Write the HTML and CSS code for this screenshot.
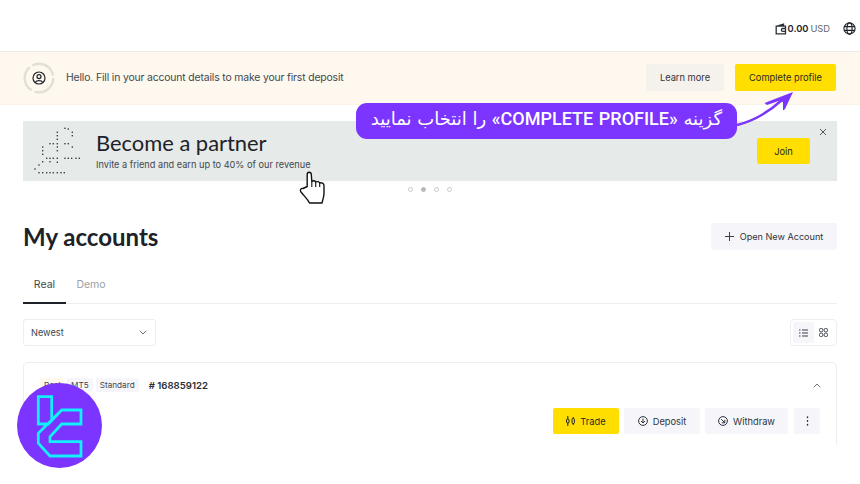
FILE: index.html
```html
<!DOCTYPE html>
<html lang="en">
<head>
    <meta charset="utf-8">
    <title>My accounts</title>
    <link rel="stylesheet" href="styles.css">
</head>
<body>

<header class="topbar">
    <svg class="wallet" width="12" height="12" viewBox="0 0 12 12"><path d="M2 3.2 8.5 1.2V3M1.2 3.2h9.3v7.6H1.2zM10.500 5.500H7.800a1.300 1.300 0 0 0 0 2.800h2.700" fill="none" stroke="#2b2f36" stroke-width="1.300"/></svg>
    <b class="balance">0.00</b>
    <span class="currency">USD</span>
    <svg class="globe" width="13" height="13" viewBox="0 0 13 13"><g fill="none" stroke="#1d2229" stroke-width="1.100"><circle cx="6.500" cy="6.500" r="5.600"/><ellipse cx="6.500" cy="6.500" rx="2.600" ry="5.600"/><path d="M1.200 4.600h10.600M1.200 8.400h10.600"/></g></svg>
</header>

<section class="notice">
    <svg class="ring" width="32" height="32" viewBox="0 0 32 32">
        <g fill="none">
            <circle cx="16" cy="16" r="14.300" stroke="#e2dfd9" stroke-width="2.400" stroke-dasharray="27 3"/>
            <g stroke="#20252b" stroke-width="1.200">
                <circle cx="16" cy="16" r="6"/>
                <circle cx="16" cy="14.600" r="2"/>
                <path d="M12.300 20.500c1-2.400 6.400-2.400 7.400 0"/>
            </g>
        </g>
    </svg>
    <p class="notice-text">Hello. Fill in your account details to make your first deposit</p>
    <a class="btn btn-soft notice-learn">Learn more</a>
    <a class="btn btn-yellow notice-complete">Complete profile</a>
</section>

<main class="content">
    <section class="partner">
        <svg class="partner-art" width="50" height="50" viewBox="0 0 50 50">
            <path fill="none" stroke="#23282e" stroke-width="1.600" stroke-linecap="round" d="M32 2.300h0M35.300 3h0M39.300 6.300h0M39.300 9.700h0M24.300 6.300h0M24.300 9.700h0M24.300 13.300h0M17 17.700h0M20.300 17.700h0M24.300 17.700h0M32 17.700h0M35.300 17.700h0M39.300 21h0M9.700 21h0M9.700 24.700h0M9.700 28.300h0M24.300 21h0M24.300 24.700h0M13.700 32.300h0M17 32.300h0M20.300 32.300h0M24.300 32.300h0M32 32.300h0M35.300 32.300h0M38.700 32.300h0M43 32.300h0M46.300 32.300h0M9.700 35.700h0M17 35.700h0M24.300 36.300h0M6 39h0M2 43h0M6 46.700h0M9.700 46.700h0M13.700 46.700h0M17 46.700h0M20.300 46.700h0M24.300 46.700h0M28 46.700h0M31.300 46.700h0"/>
        </svg>
        <div class="partner-copy">
            <h2 class="partner-title">Become a partner</h2>
            <p class="partner-sub">Invite a friend and earn up to 40% of our revenue</p>
        </div>
        <a class="btn btn-yellow partner-join">Join</a>
        <svg class="partner-close" width="8" height="8" viewBox="0 0 8 8"><path d="M1 1l6 6M7 1 1 7" stroke="#555b62" stroke-width="1"/></svg>
    </section>

    <div class="dots">
        <i class="dot"></i><i class="dot dot-on"></i><i class="dot"></i><i class="dot"></i>
    </div>

    <div class="title-row">
        <h1>My accounts</h1>
        <a class="btn btn-soft btn-open">
            <svg width="9" height="9" viewBox="0 0 9 9"><path d="M4.500 0v9M0 4.500h9" stroke="#3a3f46" stroke-width="1"/></svg>
            Open New Account
        </a>
    </div>

    <nav class="tabs">
        <a class="tab tab-on">Real</a>
        <a class="tab">Demo</a>
    </nav>

    <div class="toolbar">
        <div class="select">
            Newest
            <svg width="8" height="5" viewBox="0 0 8 5"><path d="M.7.7 4 4 7.300.7" fill="none" stroke="#777" stroke-width="1"/></svg>
        </div>
        <div class="view-toggle">
            <span class="view view-on">
                <svg width="9" height="8" viewBox="0 0 9 8"><path d="M0 1h1.500M0 4h1.500M0 7h1.500M3 1h6M3 4h6M3 7h6" stroke="#3a3f46" stroke-width="1"/></svg>
            </span>
            <span class="view">
                <svg width="9" height="9" viewBox="0 0 9 9"><g fill="none" stroke="#3a3f46" stroke-width="1"><rect x=".5" y=".5" width="3.300" height="3.300" rx="1.200"/><rect x="5.200" y=".5" width="3.300" height="3.300" rx="1.200"/><rect x=".5" y="5.200" width="3.300" height="3.300" rx="1.200"/><rect x="5.200" y="5.200" width="3.300" height="3.300" rx="1.200"/></g></svg>
            </span>
        </div>
    </div>

    <section class="card">
        <div class="card-head">
            <span class="tag tag-real">Real</span>
            <span class="tag">MT5</span>
            <span class="tag">Standard</span>
            <b class="acc-number"># 168859122</b>
            <svg class="card-chevron" width="8" height="5" viewBox="0 0 8 5"><path d="M.7 4.300 4 1 7.300 4.300" fill="none" stroke="#777" stroke-width="1"/></svg>
        </div>
        <div class="card-actions">
            <a class="btn btn-yellow btn-action">
                <svg width="9" height="10" viewBox="0 0 9 10"><g fill="none" stroke="#1d2229" stroke-width="1"><rect x=".6" y="3" width="2.400" height="4" rx="1"/><rect x="6" y="2.500" width="2.400" height="5" rx="1"/><path d="M1.800 0v3M1.800 7v3M7.200 1v1.500M7.200 7.500V9"/></g></svg>
                Trade
            </a>
            <a class="btn btn-soft btn-action btn-deposit">
                <svg width="10" height="10" viewBox="0 0 10 10"><g fill="none" stroke="#30353c" stroke-width="1"><circle cx="5" cy="5" r="4.400"/><path d="M5 2.500v4.500M3 5l2 2 2-2"/></g></svg>
                Deposit
            </a>
            <a class="btn btn-soft btn-action btn-withdraw">
                <svg width="10" height="10" viewBox="0 0 10 10"><g fill="none" stroke="#30353c" stroke-width="1"><circle cx="5" cy="5" r="4.400"/><path d="M3.200 3.200 6.800 6.800M6.800 3.800v3H3.800"/></g></svg>
                Withdraw
            </a>
            <a class="btn btn-soft btn-more">
                <svg width="3" height="10" viewBox="0 0 3 10"><path d="M1.500 1v.5M1.500 4.800v.5M1.500 8.500v.5" stroke="#2b2f36" stroke-width="1.500" stroke-linecap="round"/></svg>
            </a>
        </div>
    </section>
</main>

<!-- tutorial marks laid over the screenshot -->
<div class="hint" dir="rtl">گزینه «COMPLETE PROFILE» را انتخاب نمایید</div>

<svg class="hint-arrow" width="60" height="40" viewBox="0 0 60 40">
    <path d="M0 33Q24 27 45 8" fill="none" stroke="#7b35ff" stroke-width="2.400"/>
    <path d="M56 0 27.500 11 30 13 43 8.500 46 10 46 18.500 48 17Z" fill="#7b35ff"/>
</svg>

<svg class="hand" width="28" height="36" viewBox="0 0 28 36">
    <path d="M8.200 16.500 V4.500C8.200 1.500 12 1.500 12.300 4.500L12.800 11.500C14 10.300 16.300 10.500 16.700 12C18 11.300 20.300 11.500 20.700 13C22.500 12.300 25 13.500 25 15.500V23C25 27 24 29 23 33H10.500C9 29.500 6.500 27.500 2 22C.5 20 2 18 4 18.500Z" fill="#fff" stroke="#111" stroke-width="1.400" stroke-linejoin="round"/>
    <path d="M12.800 11.500V17M16.700 12V17M20.700 13V17" fill="none" stroke="#111" stroke-width="1.100"/>
</svg>

<svg class="brand" width="85" height="85" viewBox="0 0 85 85">
    <circle cx="42.500" cy="42.500" r="42.500" fill="#7b35ff"/>
    <path d="M34.700 37V13.700H21.300V41H31.300L44.700 27H64V41H44.700L33 53.700V58.700H64V73H33L21.300 60.300V50.300L44.700 27" fill="none" stroke="#12f0fb" stroke-width="2.800"/>
</svg>

</body>
</html>
```

FILE: styles.css
```css
* {
    box-sizing: border-box;
}

body {
    margin: 0;
    height: 484px;
    overflow: hidden;
    position: relative;
    background: #fff;
    font-family: Inter, "Liberation Sans", sans-serif;
    color: #30353c;
}

h1, h2, p {
    margin: 0;
}

/* top bar */
.topbar {
    height: 52px;
    padding: 6px 4px 0 0;
    display: flex;
    align-items: center;
    justify-content: flex-end;
    border-bottom: 1px solid #eceae6;
    font-size: 9.300px;
}

.wallet {
    margin-right: 1px;
}

.balance {
    font-weight: 600;
    color: #1d2229;
}

.currency {
    margin-left: 2px;
    color: #60656c;
}

.globe {
    margin-left: 13px;
}

/* buttons */
.btn {
    display: flex;
    align-items: center;
    justify-content: center;
    height: 27px;
    border-radius: 2px;
    font-size: 9.300px;
    color: #30353c;
}

.btn-yellow {
    background: #ffde00;
    color: #2a2a20;
}

.btn-soft {
    background: #f6f6fa;
}

/* complete profile notice */
.notice {
    height: 53px;
    padding: 0 24px 1px 23px;
    display: flex;
    align-items: center;
    background: #fef8ef;
    border-bottom: 1px solid #fbf3e3;
}

.notice-text {
    margin-left: 11px;
    flex: 1;
    font-size: 10.400px;
    letter-spacing: -.15px;
    color: #43474d;
}

.notice-learn {
    width: 78px;
    background: #f5f1ec;
}

.notice-complete {
    width: 101px;
    margin-left: 11px;
}

/* page */
.content {
    padding: 16px 23px 0;
}

.partner {
    position: relative;
    height: 60px;
    padding: 0 27px 0 10px;
    display: flex;
    align-items: center;
    background: #e6eae8;
}

.partner-copy {
    margin-left: 13px;
    flex: 1;
}

.partner-title {
    font-family: Lato, sans-serif;
    font-size: 21.900px;
    font-weight: 400;
    line-height: 22px;
    padding-bottom: 4px;
    color: #1d2229;
}

.partner-sub {
    font-size: 9.200px;
    line-height: 13px;
    color: #43474d;
}

.partner-join {
    width: 53px;
    height: 26px;
}

.partner-close {
    position: absolute;
    top: 7px;
    right: 10px;
}

.dots {
    height: 16px;
    display: flex;
    align-items: center;
    justify-content: center;
    gap: 8px;
}

.dot {
    width: 5px;
    height: 5px;
    border: 1px solid #c9c9c9;
    border-radius: 50%;
}

.dot-on {
    background: #b9b9bd;
    border-color: #b9b9bd;
}

.title-row {
    margin-top: 26px;
    height: 27px;
    display: flex;
    align-items: center;
    justify-content: space-between;
}

h1 {
    font-family: Lato, sans-serif;
    font-size: 24px;
    font-weight: 700;
    color: #1d2229;
}

.btn-open {
    width: 126px;
    gap: 6px;
    font-size: 9.100px;
}

/* tabs */
.tabs {
    margin-top: 18px;
    height: 36px;
    display: flex;
    border-bottom: 1px solid #eeeef0;
}

.tab {
    width: 43px;
    height: 36px;
    padding-top: 10px;
    text-align: center;
    font-size: 10.500px;
    color: #9b9ea3;
}

.tab + .tab {
    margin-left: 10px;
    width: 30px;
}

.tab-on {
    color: #43474d;
    border-bottom: 2px solid #1d2229;
}

/* sort + view switch */
.toolbar {
    margin-top: 15px;
    display: flex;
    justify-content: space-between;
}

.select {
    width: 133px;
    height: 27px;
    padding: 0 8px 1px 7px;
    display: flex;
    align-items: center;
    justify-content: space-between;
    border: 1px solid #eeeef0;
    border-radius: 3px;
    font-size: 9.200px;
    color: #43474d;
}

.view-toggle {
    width: 47px;
    height: 27px;
    padding: 2px;
    display: flex;
    border: 1px solid #eeeef0;
    border-radius: 4px;
}

.view {
    flex: 1;
    display: flex;
    align-items: center;
    justify-content: center;
    border-radius: 2px;
}

.view-on {
    background: #f6f6fa;
}

/* account card */
.card {
    margin-top: 16px;
    height: 83px;
    padding: 14px 16px 0;
    overflow: hidden;
    border: 1px solid #eeeef0;
    border-bottom: 0;
    border-radius: 5px 5px 0 0;
}

.card-head {
    height: 16px;
    display: flex;
    align-items: center;
    gap: 3px;
}

.tag {
    padding: 0 4px;
    height: 14px;
    line-height: 14px;
    background: #f6f6fa;
    border-radius: 2px;
    font-size: 8.200px;
    color: #43474d;
}

.tag-real {
    width: 24px;
    background: #fef8ef;
}

.acc-number {
    margin-left: 7px;
    flex: 1;
    font-size: 9.600px;
    font-weight: 600;
    color: #2b2f36;
}

.card-chevron {
    margin-right: -1px;
}

.card-actions {
    margin-top: 15px;
    display: flex;
    justify-content: flex-end;
    gap: 5px;
}

.btn-action {
    width: 66px;
    height: 26px;
    gap: 5px;
}

.btn-deposit {
    width: 76px;
}

.btn-withdraw {
    width: 83px;
}

.btn-more {
    width: 26px;
    height: 26px;
    margin-left: 1px;
}

/* overlays */
.hint {
    position: absolute;
    left: 356px;
    top: 103px;
    width: 381px;
    height: 36px;
    padding: 0 15px 5px;
    display: flex;
    align-items: center;
    background: #7b35ff;
    border-radius: 11px;
    font-family: Roboto, "DejaVu Sans", sans-serif;
    font-size: 18px;
    font-weight: 500;
    word-spacing: 1.200px;
    color: #fff;
    white-space: nowrap;
}

.hint-arrow {
    position: absolute;
    left: 737px;
    top: 92px;
}

.hand {
    position: absolute;
    left: 299px;
    top: 170px;
}

.brand {
    position: absolute;
    left: 17px;
    top: 383px;
}
```
